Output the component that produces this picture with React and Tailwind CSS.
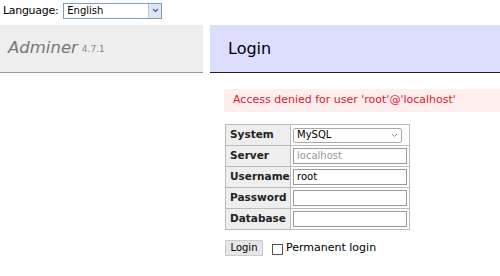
export default function App() {
  const rows = [
    { label: 'System', kind: 'select', value: 'MySQL' },
    { label: 'Server', kind: 'input', placeholder: 'localhost' },
    { label: 'Username', kind: 'input', value: 'root' },
    { label: 'Password', kind: 'input' },
    { label: 'Database', kind: 'input' },
  ];

  return (
    <div className="w-[500px] h-[276px] bg-white overflow-hidden font-['DejaVu_Sans',Verdana,sans-serif] text-black">
      {/* Language bar */}
      <div className="h-[20px] flex items-center pl-[3px] pt-[1px]">
        <span className="text-[11px] tracking-[-0.3px] leading-none">Language:</span>
        <div className="ml-[5px] w-[99px] h-[16px] border border-[#7f9db9] flex items-center bg-white">
          <span className="flex-1 pl-[3px] text-[10px] leading-none">English</span>
          <div className="w-[13px] h-[14px] bg-[#dbe6f7] border-l border-[#b5c8e6] flex items-center justify-center">
            <svg width="7" height="5" viewBox="0 0 7 5">
              <path d="M1 1 L3.5 3.5 L6 1" stroke="#4d6185" strokeWidth="1.2" fill="none" />
            </svg>
          </div>
        </div>
      </div>

      <div className="flex mt-[5px] gap-[7px]">
        {/* Menu column */}
        <div className="w-[203px] shrink-0">
          <div className="h-[48px] bg-[#eeeeee] border-b border-[#999] flex items-center pl-[8px]">
            <span className="italic text-[16.5px] text-[#777]">Adminer</span>
            <span className="ml-[4px] text-[9px] text-[#888] mt-[3px]">4.7.1</span>
          </div>
        </div>

        {/* Content */}
        <div className="flex-1">
          <div className="h-[48px] bg-[#ddddff] border-b border-[#222] flex items-center pl-[18px]">
            <span className="text-[16px]">Login</span>
          </div>

          <div className="ml-[14px] mt-[16px] h-[23px] bg-[#ffeeee] flex items-center pl-[9px]">
            <span className="text-[11px] text-[#e0162b]">Access denied for user 'root'@'localhost'</span>
          </div>

          <table className="ml-[15px] mt-[12px] border-collapse border border-[#bbb]">
            <tbody>
              {rows.map((r) => (
                <tr key={r.label} className="h-[21px]">
                  <th className="w-[65px] bg-[#eeeeee] border border-[#bbb] text-left pl-[4px] text-[10.5px] font-bold text-[#222]">
                    {r.label}
                  </th>
                  <td className="w-[119px] border border-[#bbb] px-[2px] py-0">
                    {r.kind === 'select' ? (
                      <div className="w-[109px] h-[15px] border border-[#aaa] rounded-[2px] flex items-center justify-between px-[3px]">
                        <span className="text-[10px] leading-none">{r.value}</span>
                        <svg width="7" height="5" viewBox="0 0 7 5">
                          <path d="M1 1 L3.5 3.5 L6 1" stroke="#888" strokeWidth="1" fill="none" />
                        </svg>
                      </div>
                    ) : (
                      <div className="w-[114px] h-[16px] border border-[#999] flex items-center pl-[3px]">
                        {r.value ? (
                          <span className="text-[10px] leading-none">{r.value}</span>
                        ) : r.placeholder ? (
                          <span className="text-[10px] leading-none text-[#999]">{r.placeholder}</span>
                        ) : null}
                      </div>
                    )}
                  </td>
                </tr>
              ))}
            </tbody>
          </table>

          <div className="ml-[15px] mt-[10px] flex items-center">
            <div className="w-[38px] h-[16px] bg-[#e6e6e6] border border-[#ccc] flex items-center justify-center">
              <span className="text-[10px] leading-none">Login</span>
            </div>
            <div className="ml-[9px] w-[11px] h-[11px] border border-[#555] bg-white mt-[2px]" />
            <span className="ml-[3px] text-[11px]">Permanent login</span>
          </div>
        </div>
      </div>
    </div>
  );
}
